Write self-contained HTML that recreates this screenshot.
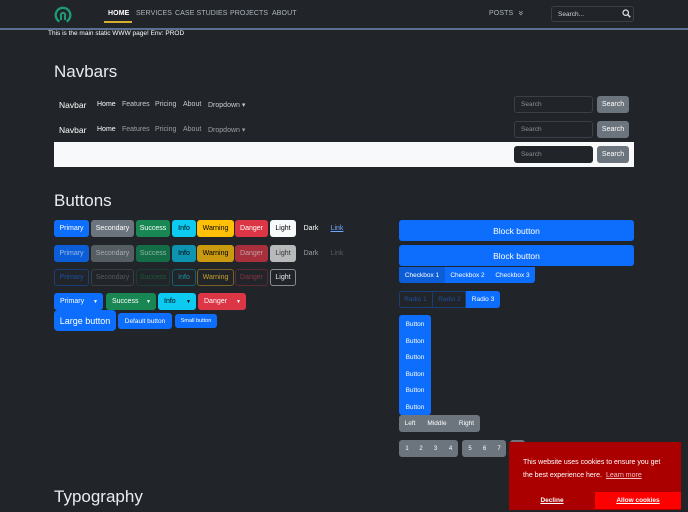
<!DOCTYPE html>
<html><head><meta charset="utf-8"><style>
*{box-sizing:border-box;margin:0;padding:0}
body{width:688px;height:512px;overflow:hidden;background:#212529;font-family:"Liberation Sans",sans-serif;color:#dee2e6;position:relative}
.a{position:absolute;white-space:nowrap}
.b{position:absolute;display:flex;align-items:center;justify-content:center;font-size:7px;border-radius:3px;color:#fff;white-space:nowrap}
.nl{position:absolute;font-size:7px;letter-spacing:.1px;color:#adb5bd;top:10px}
.h{position:absolute;font-size:17px;color:#e9ecef;left:54px}
.nb{position:absolute;font-size:7px;color:#9aa0a6}
.inp{position:absolute;border:1px solid #3b4046;border-radius:3px;font-size:6.5px;color:#8a9096;padding-left:6px;display:flex;align-items:center}
</style></head><body>
<div class="a" style="left:0;top:28px;width:688px;height:2px;background:#5a7090"></div>
<svg class="a" style="left:54px;top:5px" width="18" height="18" viewBox="0 0 18 18"><path d="M5.5 16.5 A7.3 7.3 0 1 1 12.5 16.5" fill="none" stroke="#1f9a78" stroke-width="2.3"/><path d="M7 15 V11 A2.2 2.2 0 1 1 11 11 V15" fill="none" stroke="#1f9a78" stroke-width="2"/></svg>
<div class="nl" style="left:108px;color:#fff;font-weight:bold">HOME</div>
<div class="a" style="left:104px;top:21px;width:28px;height:2px;background:#d4b030"></div>
<div class="nl" style="left:136px">SERVICES</div>
<div class="nl" style="left:175px">CASE STUDIES</div>
<div class="nl" style="left:230px">PROJECTS</div>
<div class="nl" style="left:272px">ABOUT</div>
<div class="nl" style="left:489px">POSTS</div>
<div class="a" style="left:519px;top:8px;font-size:9px;color:#adb5bd;transform:rotate(90deg)">»</div>
<div class="inp" style="left:551px;top:6px;width:83px;height:16px;color:#ced4da">Search...</div>
<svg class="a" style="left:622px;top:9px" width="9" height="9" viewBox="0 0 9 9"><circle cx="3.7" cy="3.7" r="2.7" fill="none" stroke="#dee2e6" stroke-width="1.2"/><path d="M5.8 5.8L8.3 8.3" stroke="#dee2e6" stroke-width="1.4"/></svg>
<div class="a" style="left:48px;top:30px;font-size:6.5px;color:#fff">This is the main static WWW page! Env: PROD</div>

<div class="h" style="top:62px">Navbars</div>
<div class="a" style="left:59px;top:100px;font-size:8.5px;color:#fff">Navbar</div>
<div class="nb" style="left:97px;top:101px;color:#fff">Home</div><div class="nb" style="left:122px;top:101px;color:#c8ccd0">Features</div><div class="nb" style="left:155px;top:101px;color:#c8ccd0">Pricing</div><div class="nb" style="left:183px;top:101px;color:#c8ccd0">About</div><div class="nb" style="left:208px;top:101px;color:#c8ccd0">Dropdown ▾</div>
<div class="inp" style="left:514px;top:96px;width:79px;height:17px">Search</div><div class="b" style="left:597px;top:96px;width:32px;height:17px;background:#6c757d">Search</div>
<div class="a" style="left:59px;top:125px;font-size:8.5px;color:#fff">Navbar</div>
<div class="nb" style="left:97px;top:126px;color:#fff">Home</div><div class="nb" style="left:122px;top:126px">Features</div><div class="nb" style="left:155px;top:126px">Pricing</div><div class="nb" style="left:183px;top:126px">About</div><div class="nb" style="left:208px;top:126px">Dropdown ▾</div>
<div class="inp" style="left:514px;top:121px;width:79px;height:17px">Search</div><div class="b" style="left:597px;top:121px;width:32px;height:17px;background:#6c757d">Search</div>
<div class="a" style="left:54px;top:142px;width:580px;height:25px;background:#f8f9fa"></div>
<div class="inp" style="left:514px;top:146px;width:79px;height:17px;background:#212529;border-color:#212529">Search</div><div class="b" style="left:597px;top:146px;width:32px;height:17px;background:#6c757d">Search</div>

<div class="h" style="top:191px">Buttons</div>
<div class="b" style="left:54px;top:220px;width:35px;height:17px;background:#0d6efd">Primary</div>
<div class="b" style="left:91px;top:220px;width:43px;height:17px;background:#6c757d">Secondary</div>
<div class="b" style="left:136px;top:220px;width:34px;height:17px;background:#198754">Success</div>
<div class="b" style="left:172px;top:220px;width:24px;height:17px;background:#0dcaf0;color:#000">Info</div>
<div class="b" style="left:197px;top:220px;width:37px;height:17px;background:#ffc107;color:#000">Warning</div>
<div class="b" style="left:235px;top:220px;width:33px;height:17px;background:#dc3545">Danger</div>
<div class="b" style="left:270px;top:220px;width:26px;height:17px;background:#f8f9fa;color:#000">Light</div>
<div class="b" style="left:298px;top:220px;width:26px;height:17px">Dark</div>
<div class="b" style="left:326px;top:220px;width:22px;height:17px;color:#6ea8fe;text-decoration:underline">Link</div>
<div class="b" style="left:54px;top:245px;width:35px;height:17px;background:#0b5ed7;color:#9fb8e8">Primary</div>
<div class="b" style="left:91px;top:245px;width:43px;height:17px;background:#565e64;color:#a8adb2">Secondary</div>
<div class="b" style="left:136px;top:245px;width:34px;height:17px;background:#156d47;color:#8cb8a0">Success</div>
<div class="b" style="left:172px;top:245px;width:24px;height:17px;background:#0c94b0;color:#000">Info</div>
<div class="b" style="left:197px;top:245px;width:37px;height:17px;background:#c99a10;color:#000">Warning</div>
<div class="b" style="left:235px;top:245px;width:33px;height:17px;background:#a8303c;color:#c0a0a4">Danger</div>
<div class="b" style="left:270px;top:245px;width:26px;height:17px;background:#b8b9ba;color:#333">Light</div>
<div class="b" style="left:298px;top:245px;width:26px;height:17px;color:#9a9ea2">Dark</div>
<div class="b" style="left:326px;top:245px;width:22px;height:17px;color:#555b62">Link</div>
<div class="b" style="left:54px;top:269px;width:35px;height:17px;border:1px solid #1a3f78;color:#1d4fa0">Primary</div>
<div class="b" style="left:91px;top:269px;width:43px;height:17px;border:1px solid #3a3f44;color:#53595f">Secondary</div>
<div class="b" style="left:136px;top:269px;width:34px;height:17px;border:1px solid #1a3d30;color:#1c5a3c">Success</div>
<div class="b" style="left:172px;top:269px;width:24px;height:17px;border:1px solid #14606f;color:#1895ad">Info</div>
<div class="b" style="left:197px;top:269px;width:37px;height:17px;border:1px solid #7a6320;color:#c9a02a">Warning</div>
<div class="b" style="left:235px;top:269px;width:33px;height:17px;border:1px solid #5a2a30;color:#8a3440">Danger</div>
<div class="b" style="left:270px;top:269px;width:26px;height:17px;border:1px solid #8a8d90;color:#e9ecef">Light</div>
<div class="b" style="left:54px;top:293px;width:49px;height:17px;background:#0d6efd;justify-content:flex-start;padding-left:6px">Primary<span style="position:absolute;right:5px;font-size:5px">▼</span></div>
<div class="b" style="left:106px;top:293px;width:50px;height:17px;background:#198754;justify-content:flex-start;padding-left:6px">Success<span style="position:absolute;right:5px;font-size:5px">▼</span></div>
<div class="b" style="left:158px;top:293px;width:38px;height:17px;background:#0dcaf0;color:#000;justify-content:flex-start;padding-left:6px">Info<span style="position:absolute;right:5px;font-size:5px">▼</span></div>
<div class="b" style="left:198px;top:293px;width:48px;height:17px;background:#dc3545;justify-content:flex-start;padding-left:6px">Danger<span style="position:absolute;right:5px;font-size:5px">▼</span></div>
<div class="b" style="left:54px;top:310px;width:62px;height:21px;background:#0d6efd;font-size:9px;border-radius:4px">Large button</div>
<div class="b" style="left:118px;top:313px;width:54px;height:16px;background:#0d6efd;font-size:6.5px">Default button</div>
<div class="b" style="left:175px;top:314px;width:42px;height:14px;background:#0d6efd;font-size:5.5px">Small button</div>

<div class="b" style="left:399px;top:220px;width:235px;height:21px;background:#0d6efd;font-size:8.5px">Block button</div>
<div class="b" style="left:399px;top:245px;width:235px;height:21px;background:#0d6efd;font-size:8.5px">Block button</div>
<div class="b" style="left:399px;top:267px;width:136px;height:16px;background:#0d6efd;border-radius:0 0 3px 3px"></div>
<div class="b" style="left:399px;top:267px;width:46px;height:16px;background:#0b5ed7;border-radius:0 0 0 3px;font-size:6.5px">Checkbox 1</div>
<div class="b" style="left:445px;top:267px;width:45px;height:16px;font-size:6.5px">Checkbox 2</div>
<div class="b" style="left:490px;top:267px;width:45px;height:16px;font-size:6.5px">Checkbox 3</div>
<div class="b" style="left:399px;top:291px;width:67px;height:17px;border:1px solid #1a3f78;border-radius:3px 0 0 3px"></div>
<div class="b" style="left:399px;top:291px;width:34px;height:17px;color:#1d4fa0;font-size:6.5px;border-right:1px solid #1a3f78">Radio 1</div>
<div class="b" style="left:433px;top:291px;width:33px;height:17px;color:#1d4fa0;font-size:6.5px">Radio 2</div>
<div class="b" style="left:466px;top:291px;width:34px;height:17px;background:#0d6efd;font-size:6.5px;border-radius:0 3px 3px 0">Radio 3</div>
<div class="a" style="left:399px;top:315px;width:32px;height:100px;background:#0d6efd;border-radius:3px"></div>
<div class="b" style="left:399px;top:316px;width:32px;height:16px;font-size:6.5px">Button</div>
<div class="b" style="left:399px;top:333px;width:32px;height:16px;font-size:6.5px">Button</div>
<div class="b" style="left:399px;top:349px;width:32px;height:16px;font-size:6.5px">Button</div>
<div class="b" style="left:399px;top:366px;width:32px;height:16px;font-size:6.5px">Button</div>
<div class="b" style="left:399px;top:382px;width:32px;height:16px;font-size:6.5px">Button</div>
<div class="b" style="left:399px;top:399px;width:32px;height:16px;font-size:6.5px">Button</div>
<div class="a" style="left:399px;top:415px;width:81px;height:17px;background:#6c757d;border-radius:3px"></div>
<div class="b" style="left:399px;top:415px;width:22px;height:17px;font-size:6.5px">Left</div>
<div class="b" style="left:421px;top:415px;width:32px;height:17px;font-size:6.5px">Middle</div>
<div class="b" style="left:453px;top:415px;width:27px;height:17px;font-size:6.5px">Right</div>
<div class="a" style="left:399px;top:440px;width:59px;height:17px;background:#6c757d;border-radius:3px"></div>
<div class="b" style="left:400px;top:440px;width:14px;height:17px;font-size:6px">1</div>
<div class="b" style="left:414px;top:440px;width:14px;height:17px;font-size:6px">2</div>
<div class="b" style="left:428px;top:440px;width:15px;height:17px;font-size:6px">3</div>
<div class="b" style="left:443px;top:440px;width:15px;height:17px;font-size:6px">4</div>
<div class="a" style="left:462px;top:440px;width:44px;height:17px;background:#6c757d;border-radius:3px"></div>
<div class="b" style="left:463px;top:440px;width:14px;height:17px;font-size:6px">5</div>
<div class="b" style="left:477px;top:440px;width:15px;height:17px;font-size:6px">6</div>
<div class="b" style="left:492px;top:440px;width:14px;height:17px;font-size:6px">7</div>
<div class="a" style="left:510px;top:440px;width:15px;height:17px;background:#6c757d;border-radius:3px"></div>

<div class="a" style="left:509px;top:442px;width:172px;height:68px;background:#aa0000"></div>
<div class="a" style="left:523px;top:456px;font-size:7px;color:#fff;line-height:13px">This website uses cookies to ensure you get<br>the best experience here. <span style="text-decoration:underline;color:#f0c0c0;margin-left:2px">Learn more</span></div>
<div class="b" style="left:509px;top:492px;width:86px;height:17px;font-size:6.5px;font-weight:bold;text-decoration:underline;border-radius:0">Decline</div>
<div class="b" style="left:595px;top:492px;width:86px;height:17px;background:#ff0000;font-size:6.5px;font-weight:bold;text-decoration:underline;border-radius:0">Allow cookies</div>

<div class="h" style="top:487px">Typography</div>
</body></html>
